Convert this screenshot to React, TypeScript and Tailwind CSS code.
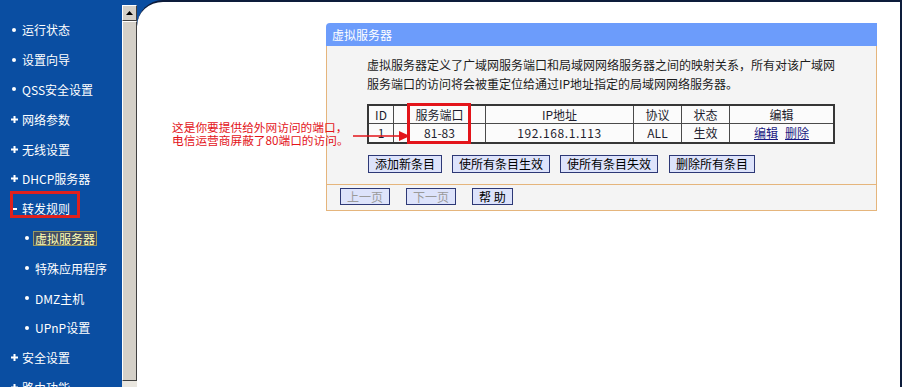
import { ReactNode } from "react";

type MenuItem = {
  label: string;
  mark: "dot" | "plus" | "minus";
  sub?: boolean;
  active?: boolean;
  boxed?: boolean;
};

const menu: MenuItem[] = [
  { label: "运行状态", mark: "dot" },
  { label: "设置向导", mark: "dot" },
  { label: "QSS安全设置", mark: "dot" },
  { label: "网络参数", mark: "plus" },
  { label: "无线设置", mark: "plus" },
  { label: "DHCP服务器", mark: "plus" },
  { label: "转发规则", mark: "minus", boxed: true },
  { label: "虚拟服务器", mark: "dot", sub: true, active: true },
  { label: "特殊应用程序", mark: "dot", sub: true },
  { label: "DMZ主机", mark: "dot", sub: true },
  { label: "UPnP设置", mark: "dot", sub: true },
  { label: "安全设置", mark: "plus" },
  { label: "路由功能", mark: "plus" },
];

function Mark({ mark }: { mark: MenuItem["mark"] }) {
  if (mark === "plus") {
    return (
      <svg width="7" height="7" viewBox="0 0 7 7" className="-ml-[1px]">
        <path d="M3.5 0v7M0 3.5h7" stroke="white" strokeWidth="2" />
      </svg>
    );
  }
  if (mark === "minus") {
    return <span className="block h-[2px] w-[5px] bg-white" />;
  }
  return <span className="block h-[4px] w-[4px] rounded-full bg-white" />;
}

function SideItem({ item }: { item: MenuItem }) {
  return (
    <div
      className={`relative flex h-[29.8px] shrink-0 items-center ${item.sub ? "pl-[25px]" : "pl-[12px]"}`}
    >
      <span className="flex w-[8px] items-center">
        <Mark mark={item.mark} />
      </span>
      <span
        className={
          item.active
            ? "border border-[#9a9a62] bg-[#3f4b63] px-[1px] leading-[13px] text-[#ffffb4]"
            : "border border-transparent px-[1px] leading-[13px] text-white"
        }
      >
        {item.label}
      </span>
      {item.boxed && (
        <div className="absolute left-[10px] top-[-3px] h-[27px] w-[70px] border-[3px] border-[#e0201c]" />
      )}
    </div>
  );
}

function Btn({
  children,
  disabled,
  small,
}: {
  children: ReactNode;
  disabled?: boolean;
  small?: boolean;
}) {
  return (
    <button
      className={`${small ? "h-[17px]" : "h-[18px]"} whitespace-pre border border-[#2d3876] bg-[#dde3fb] px-[6px] text-[12px] leading-none ${disabled ? "text-[#9a9a9a]" : "text-black"}`}
    >
      {children}
    </button>
  );
}

const cols = ["ID", "服务端口", "IP地址", "协议", "状态", "编辑"];

function RuleTable() {
  return (
    <div className="relative mt-[11px] w-[468px] border-2 border-[#363636] bg-[#4a4a4a]">
      <div className="grid grid-cols-[24px_91px_147px_47px_47px_103px] gap-px text-[12px] text-[#1d1d2e]">
        {cols.map((c) => (
          <div key={c} className="flex h-[17px] items-center justify-center bg-[#fbfbfb]">
            {c}
          </div>
        ))}
        <div className="flex h-[18px] items-center justify-center bg-[#fbfbfb]">1</div>
        <div className="flex h-[18px] items-center justify-center bg-[#fbfbfb]">81-83</div>
        <div className="flex h-[18px] items-center justify-center bg-[#fbfbfb] tracking-[0.6px]">
          192.168.1.113
        </div>
        <div className="flex h-[18px] items-center justify-center bg-[#fbfbfb]">ALL</div>
        <div className="flex h-[18px] items-center justify-center bg-[#fbfbfb]">生效</div>
        <div className="flex h-[18px] items-center justify-center gap-[7px] bg-[#fbfbfb] text-[#1a1a82]">
          <span className="underline">编辑</span>
          <span className="underline">删除</span>
        </div>
      </div>
      {/* red marker around the port column */}
      <div className="absolute left-[38px] top-[-3px] h-[41px] w-[64px] border-[3px] border-[#e3141a]" />
    </div>
  );
}

function Panel() {
  return (
    <div className="w-[551px]">
      <div className="flex h-[23px] items-center rounded-tl-[4px] bg-[#6c9cfb] pl-[6px] text-[12px] text-white">
        虚拟服务器
      </div>
      <div className="border-x border-b border-[#e5b57c] bg-[#f4f4f4]">
        <div className="border-b border-[#e5b57c] pb-[11px] pl-[40px] pt-[9px]">
          <p className="whitespace-nowrap text-[12px] leading-[19px] text-[#1c1c1c]">
            虚拟服务器定义了广域网服务端口和局域网网络服务器之间的映射关系，所有对该广域网
            <br />
            服务端口的访问将会被重定位给通过IP地址指定的局域网网络服务器。
          </p>
          <RuleTable />
          <div className="ml-[1px] mt-[11px] flex gap-[10px]">
            <Btn>添加新条目</Btn>
            <Btn>使所有条目生效</Btn>
            <Btn>使所有条目失效</Btn>
            <span className="ml-[1px]">
              <Btn>删除所有条目</Btn>
            </span>
          </div>
        </div>
        <div className="flex gap-[16px] pb-[5px] pl-[13px] pt-[3px]">
          <Btn small disabled>
            上一页
          </Btn>
          <Btn small disabled>
            下一页
          </Btn>
          <Btn small>帮 助</Btn>
        </div>
      </div>
    </div>
  );
}

export default function App() {
  return (
    <div className="flex h-[387px] w-[908px] overflow-hidden bg-white font-['Noto_Sans_CJK_SC','Noto_Sans',sans-serif] text-[12px]">
      {/* left menu */}
      <aside className="flex w-[137px] shrink-0 bg-[#0a4ea2]">
        <nav className="flex w-[122px] flex-col pt-[15px]">
          {menu.map((item) => (
            <SideItem key={item.label} item={item} />
          ))}
        </nav>
        <div className="flex w-[15px] flex-col pt-[5px]">
          <div className="flex h-[16px] items-center justify-center border border-b-[#404040] border-l-white border-r-[#404040] border-t-white bg-[#d4d0c8]">
            <svg width="7" height="4" viewBox="0 0 7 4">
              <path d="M3.5 0L7 4H0z" fill="black" />
            </svg>
          </div>
          <div className="h-[360px] border border-b-[#404040] border-l-white border-r-[#404040] border-t-white bg-[#d4d0c8]" />
          <div className="flex-1 bg-[#e9e6df]" />
        </div>
      </aside>

      {/* main frame */}
      <main className="w-[765px] shrink-0 bg-[#0a4ea2]">
        <div className="relative h-full rounded-tl-[26px] border-r-2 border-t-2 border-[#0d1c3b] bg-white pl-[189px] pt-[21px]">
          <Panel />

          {/* annotation */}
          <div className="absolute left-[35px] top-[118px] whitespace-nowrap text-[11.7px] leading-[13px] text-[#e3141a]">
            <div>这是你要提供给外网访问的端口，</div>
            <div>电信运营商屏蔽了80端口的访问。</div>
          </div>
          <svg
            className="absolute left-[215px] top-[127px]"
            width="60"
            height="14"
            viewBox="0 0 60 14"
          >
            <path d="M1 7H50" stroke="#e3141a" strokeWidth="1.5" />
            <path d="M47 2L58 7L47 12z" fill="#e3141a" />
          </svg>
        </div>
      </main>
      <div className="flex-1 bg-white" />
    </div>
  );
}
